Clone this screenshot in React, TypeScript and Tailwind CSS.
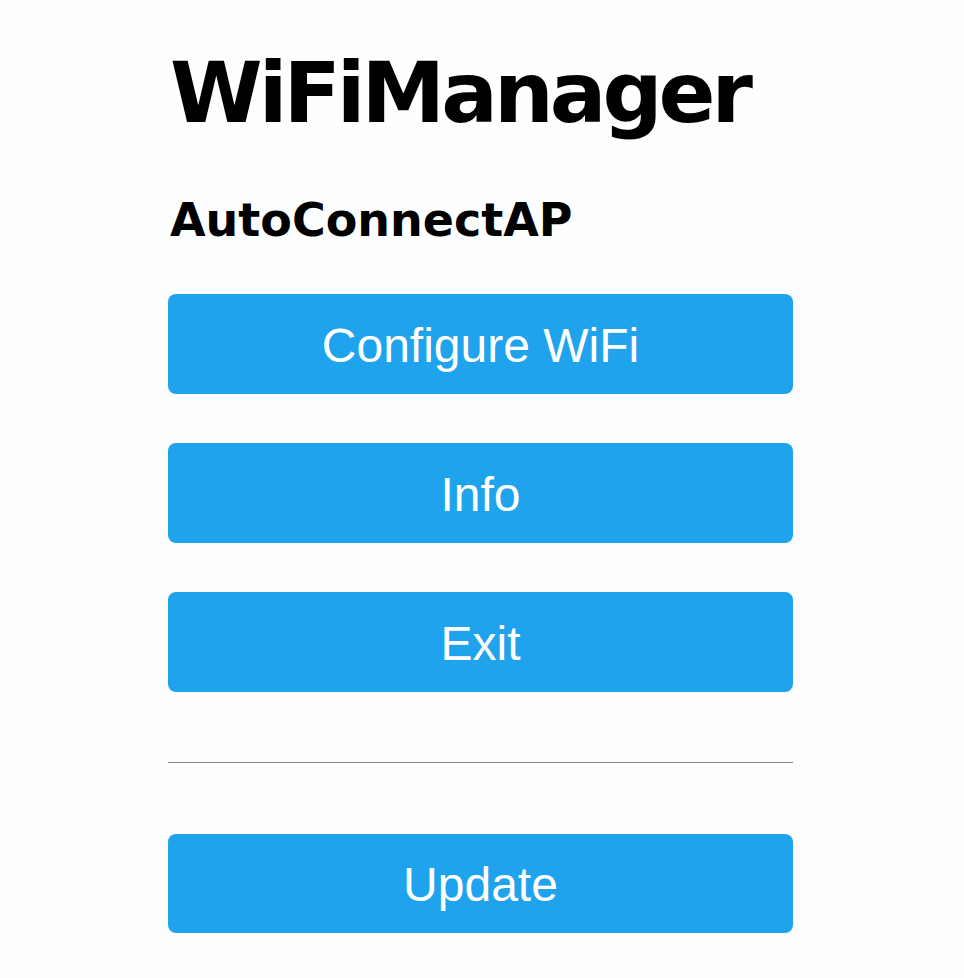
export default function App() {
  const buttons = ['Configure WiFi', 'Info', 'Exit'];

  return (
    <div className="min-h-[978px] w-full bg-[#fdfeff]">
      <div className="ml-[168px] w-[625px] pt-[51px]">
        {/* Title */}
        <h1 className="pl-[2px] font-['DejaVu_Sans',sans-serif] text-[84px] font-bold leading-none tracking-[-4px] text-black">
          WiFiManager
        </h1>
        <h3 className="mt-[62px] pl-[2px] font-['DejaVu_Sans',sans-serif] text-[46px] font-bold leading-none text-black">
          AutoConnectAP
        </h3>

        {/* Menu */}
        <div className="mt-[51px] flex flex-col gap-[49px]">
          {buttons.map((label) => (
            <button
              key={label}
              className="flex h-[100px] w-full items-center justify-center rounded-[8px] bg-[#1fa3ec] pt-[3px] font-['Liberation_Sans',Arial,sans-serif] text-[48px] text-white"
            >
              {label}
            </button>
          ))}
        </div>

        <div className="mt-[70px] h-px w-full bg-[#8a8a8a]" />

        <button className="mt-[71px] flex h-[99px] w-full items-center justify-center rounded-[8px] bg-[#1fa3ec] pt-[3px] font-['Liberation_Sans',Arial,sans-serif] text-[48px] text-white">
          Update
        </button>
      </div>
    </div>
  );
}
